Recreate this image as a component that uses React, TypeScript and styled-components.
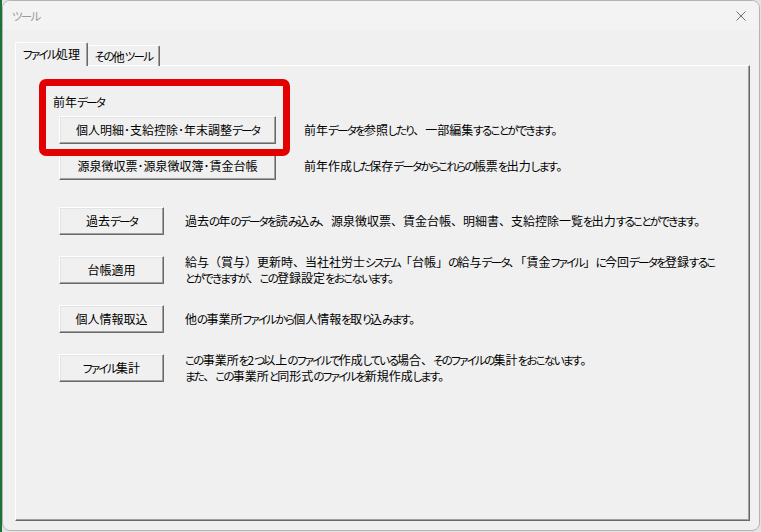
import React from "react";
import styled, { createGlobalStyle } from "styled-components";

const GlobalStyle = createGlobalStyle`
  html, body {
    margin: 0;
    padding: 0;
  }
  body {
    background: linear-gradient(to right, #1f7236 0 2px, #e4e4e4 2px);
    font-family: "Noto Sans CJK JP", "Noto Sans", sans-serif;
    font-size: 12px;
    color: #000;
  }
`;

// Meiryo UI style: kana are narrower than kanji, punctuation stays full width
const Kana = styled.span`
  font-size: 11.5px;
  font-feature-settings: "palt";
  letter-spacing: -1.7px;
`;

function Jp({ text }: { text: string }) {
  const parts = text.split(/([\u3041-\u3096\u30a1-\u30fa\u30fc]+)/);
  return (
    <>
      {parts.map((p, i) => (i % 2 === 1 ? <Kana key={i}>{p}</Kana> : p))}
    </>
  );
}

const Window = styled.div`
  box-sizing: border-box;
  margin-left: 2px;
  width: 758px;
  height: 531px;
  border: 1px solid #b4b4b4;
  border-radius: 8px;
  background: #f0f0f0;
  display: flex;
  flex-direction: column;
  overflow: hidden;
`;

const TitleBar = styled.div`
  height: 29px;
  flex: none;
  display: flex;
  align-items: center;
  justify-content: space-between;
  padding: 0 9px 0 9px;
  background: #f3f3f3;
  color: #9a9a9a;
  font-size: 12px;
`;

const CloseButton = styled.span`
  display: flex;
  width: 10px;
  height: 10px;
  margin-right: 4px;
`;

const Body = styled.div`
  flex: 1;
  display: flex;
  flex-direction: column;
  padding: 12px 9px 9px 12px;
  min-height: 0;
`;

const TabStrip = styled.div`
  display: flex;
  align-items: flex-end;
  height: 24px;
  margin-bottom: -1px;
  position: relative;
  z-index: 1;
`;

const Tab = styled.div<{ $active?: boolean }>`
  box-sizing: border-box;
  height: ${(p) => (p.$active ? "24px" : "21px")};
  width: ${(p) => (p.$active ? "73px" : "72px")};
  display: flex;
  align-items: center;
  justify-content: center;
  padding-bottom: ${(p) => (p.$active ? "2px" : "0")};
  background: #f0f0f0;
  border-top: 1px solid #fff;
  border-left: ${(p) => (p.$active ? "1px solid #fff" : "none")};
  border-right: 1px solid #696969;
  box-shadow: ${(p) => (p.$active ? "inset -1px 0 #a0a0a0" : "inset -1px 0 #a0a0a0, inset 0 -1px #fff")};
  border-radius: 2px 2px 0 0;
  font-size: 12px;
  white-space: nowrap;
`;

const Panel = styled.div`
  position: relative;
  flex: 1;
  box-sizing: border-box;
  border-top: 1px solid #fff;
  border-left: 1px solid #fff;
  border-right: 1px solid #696969;
  border-bottom: 1px solid #696969;
  box-shadow: inset -1px -1px #a0a0a0;
  padding: 28px 0 0 43px;
`;

const GroupLabel = styled.div`
  margin-left: -6px;
  line-height: 16px;
  margin-bottom: 6px;
`;

const ButtonGrid = styled.div<{ $buttonWidth: number; $gap: number; $rowGap: number }>`
  display: grid;
  grid-template-columns: ${(p) => p.$buttonWidth}px 1fr;
  column-gap: ${(p) => p.$gap}px;
  row-gap: ${(p) => p.$rowGap}px;
  align-items: center;
`;

const LowerGrid = styled(ButtonGrid)`
  margin-top: 27px;
`;

const ClassicButton = styled.button`
  box-sizing: border-box;
  height: 28px;
  width: 100%;
  margin: 0;
  padding: 0 0 1px;
  background: #f0f0f0;
  border: 1px solid;
  border-color: #fff #696969 #696969 #fff;
  box-shadow: inset -1px -1px #a0a0a0, inset 1px 1px #e3e3e3;
  font-family: inherit;
  font-size: 12px;
  color: #000;
  white-space: nowrap;
  cursor: default;
`;

const Desc = styled.div`
  line-height: 16px;
  white-space: nowrap;
`;

const Highlight = styled.div`
  position: absolute;
  left: 23px;
  top: 13px;
  width: 251px;
  height: 77px;
  box-sizing: border-box;
  border: 7px solid #e20000;
  border-radius: 7px;
  pointer-events: none;
  z-index: 2;
`;

const rows: { label: string; lines: string[] }[] = [
  {
    label: "過去データ",
    lines: ["過去の年のデータを読み込み、源泉徴収票、賃金台帳、明細書、支給控除一覧を出力することができます。"],
  },
  {
    label: "台帳適用",
    lines: [
      "給与（賞与）更新時、当社社労士システム「台帳」の給与データ、「賃金ファイル」に今回データを登録するこ",
      "とができますが、この登録設定をおこないます。",
    ],
  },
  { label: "個人情報取込", lines: ["他の事業所ファイルから個人情報を取り込みます。"] },
  {
    label: "ファイル集計",
    lines: [
      "この事業所を2つ以上のファイルで作成している場合、そのファイルの集計をおこないます。",
      "また、この事業所と同形式のファイルを新規作成します。",
    ],
  },
];

export default function App() {
  return (
    <>
      <GlobalStyle />
      <Window>
        <TitleBar>
          <span>
            <Jp text="ツール" />
          </span>
          <CloseButton>
            <svg width="10" height="10" viewBox="0 0 10 10">
              <path d="M0.5 0.5 L9.5 9.5 M9.5 0.5 L0.5 9.5" stroke="#6e6e6e" strokeWidth="1" fill="none" />
            </svg>
          </CloseButton>
        </TitleBar>
        <Body>
          <TabStrip>
            <Tab $active>
              <Jp text="ファイル処理" />
            </Tab>
            <Tab>
              <Jp text="その他ツール" />
            </Tab>
          </TabStrip>
          <Panel>
            <GroupLabel>
              <Jp text="前年データ" />
            </GroupLabel>
            <ButtonGrid $buttonWidth={217} $gap={28} $rowGap={8}>
              <ClassicButton>
                <Jp text="個人明細･支給控除･年末調整データ" />
              </ClassicButton>
              <Desc>
                <Jp text="前年データを参照したり、一部編集することができます。" />
              </Desc>
              <ClassicButton>
                <Jp text="源泉徴収票･源泉徴収簿･賃金台帳" />
              </ClassicButton>
              <Desc>
                <Jp text="前年作成した保存データからこれらの帳票を出力します。" />
              </Desc>
            </ButtonGrid>
            <LowerGrid $buttonWidth={105} $gap={21} $rowGap={19}>
              {rows.map((r) => (
                <React.Fragment key={r.label}>
                  <ClassicButton>
                    <Jp text={r.label} />
                  </ClassicButton>
                  <Desc>
                    {r.lines.map((l, i) => (
                      <React.Fragment key={i}>
                        {i > 0 && <br />}
                        <Jp text={l} />
                      </React.Fragment>
                    ))}
                  </Desc>
                </React.Fragment>
              ))}
            </LowerGrid>
            <Highlight />
          </Panel>
        </Body>
      </Window>
    </>
  );
}
